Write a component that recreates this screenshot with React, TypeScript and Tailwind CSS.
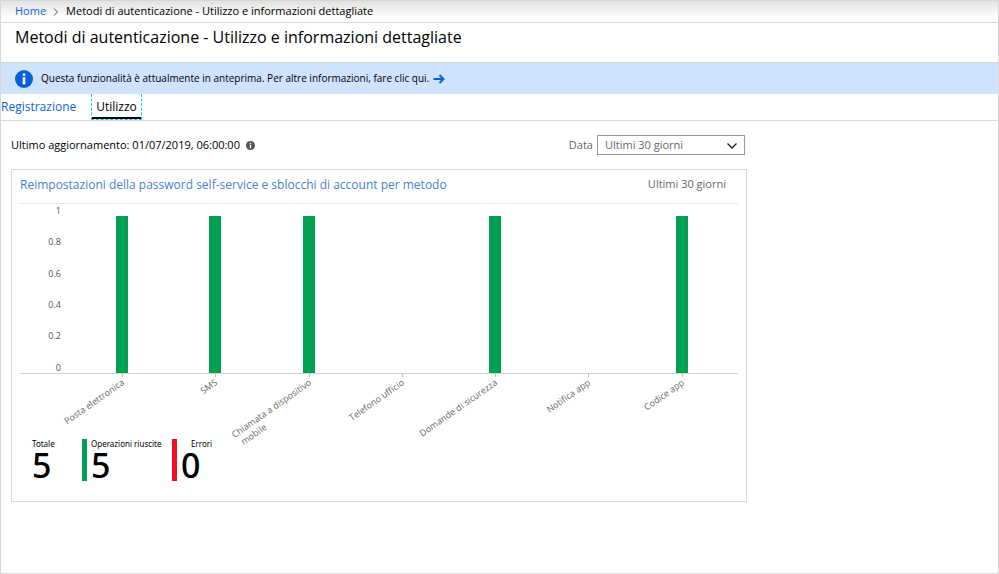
const bars = [
  { label: ['Posta elettronica'], value: 1 },
  { label: ['SMS'], value: 1 },
  { label: ['Chiamata a dispositivo', 'mobile'], value: 1 },
  { label: ['Telefono ufficio'], value: 0 },
  { label: ['Domande di sicurezza'], value: 1 },
  { label: ['Notifica app'], value: 0 },
  { label: ['Codice app'], value: 1 },
]

const ticks = ['1', '0.8', '0.6', '0.4', '0.2', '0']

function InfoIcon({ className }: { className: string }) {
  return (
    <svg viewBox="0 0 18 18" className={className} aria-hidden="true">
      <circle cx="9" cy="9" r="9" fill="currentColor" />
      <rect x="7.7" y="3.4" width="2.6" height="2.4" className="fill-white" />
      <rect x="7.7" y="7.2" width="2.6" height="7.2" className="fill-white" />
    </svg>
  )
}

function Chart() {
  return (
    <svg viewBox="0 0 718 250" className="block w-full" role="img" aria-label="Reimpostazioni per metodo">
      {ticks.map((tick, i) => (
        <text key={tick} x="41" y={10 + Math.round(i * 31.3)} textAnchor="end" className="fill-[#555] text-[9px]">
          {tick}
        </text>
      ))}
      <rect x="0" y="169" width="718" height="1" className="fill-[#d0d0d0]" />
      {bars.map((bar, i) => {
        const x = Math.round(102 + i * 93.25)
        return (
          <g key={bar.label[0]}>
            <rect x={x} y="170" width="1" height="3" className="fill-[#bbb]" />
            {bar.value > 0 && (
              <rect x={x - 6} y={169 - bar.value * 157} width="12" height={bar.value * 157} className="fill-[#00a152]" />
            )}
            <g transform={`translate(${x + 3} 180) rotate(-35)`} className="fill-[#666] text-[9px]">
              <text textAnchor="end">{bar.label[0]}</text>
              {bar.label[1] && (
                <text x="-91" y="11">
                  {bar.label[1]}
                </text>
              )}
            </g>
          </g>
        )
      })}
    </svg>
  )
}

export default function App() {
  return (
    <div className="min-h-screen border border-[#d6d6d6] bg-white font-['Open_Sans','Noto_Sans',sans-serif] text-black">
      <nav className="flex h-[22px] items-center border-b border-[#d6d6d6] bg-linear-to-b from-[#e2e2e2] to-white to-80% px-3.5 text-[11px]">
        <a href="#" className="text-[#0f62d6]">Home</a>
        <svg viewBox="0 0 6 8" className="mx-[7px] h-2 w-1.5 fill-none stroke-[#555]" aria-hidden="true">
          <path d="M1 0.5 4.5 4 1 7.5" />
        </svg>
        <span>Metodi di autenticazione - Utilizzo e informazioni dettagliate</span>
      </nav>

      <header className="h-10 border-b border-[#d2d6da] px-3.5">
        <h1 className="text-base leading-7">Metodi di autenticazione - Utilizzo e informazioni dettagliate</h1>
      </header>

      <div className="flex h-[31px] items-center bg-[#cfe3fd] px-3.5 text-[10px]">
        <InfoIcon className="mr-2 size-[18px] text-[#0a5fd8]" />
        <span>Questa funzionalità è attualmente in anteprima. Per altre informazioni, fare clic qui.</span>
        <a href="#" aria-label="Altre informazioni" className="ml-1 text-[#0f62d6]">
          <svg viewBox="0 0 12 10" className="h-2.5 w-3 fill-none stroke-current stroke-2" aria-hidden="true">
            <path d="M0.5 5H10M6.5 1 10.5 5 6.5 9" />
          </svg>
        </a>
      </div>

      <div role="tablist" className="flex h-[27px] border-b border-[#d9d9d9] text-xs">
        <button role="tab" aria-selected="false" className="mr-[15px] text-[#0f62d6]">Registrazione</button>
        <button role="tab" aria-selected="true" className="border-x border-b border-dashed border-[#19c8ee]">
          <span className="block h-full border-b-2 border-solid border-black px-1 leading-[26px]">Utilizzo</span>
        </button>
      </div>

      <main className="max-w-[746px] pl-2.5">
        <div className="flex h-12 items-center justify-between text-[11px]">
          <p className="flex items-center">
            Ultimo aggiornamento: 01/07/2019, 06:00:00
            <InfoIcon className="ml-1.5 size-[9px] text-[#555]" />
          </p>
          <div className="flex items-center gap-1 pr-0.5 text-[#666]">
            <label htmlFor="range">Data</label>
            <div className="relative">
              <select id="range" className="block h-5 w-37 appearance-none border border-[#999] bg-white pl-[7px]">
                <option>Ultimi 30 giorni</option>
              </select>
              <svg viewBox="0 0 10 6" className="pointer-events-none absolute top-2 right-2 h-1.5 w-2.5 fill-none stroke-[#222] stroke-[1.4]" aria-hidden="true">
                <path d="M0.5 0.5 5 5 9.5 0.5" />
              </svg>
            </div>
          </div>
        </div>

        <section className="border border-[#d9d9d9] px-2 pb-5">
          <div className="flex h-[34px] items-center justify-between border-b border-[#e8e8e8] pr-3 pb-1 text-[11px]">
            <h2 className="text-xs text-[#4a80cc]">Reimpostazioni della password self-service e sblocchi di account per metodo</h2>
            <span className="text-[#666]">Ultimi 30 giorni</span>
          </div>
          <Chart />
          <dl className="-mt-[15px] flex pl-3 font-['Noto_Sans',sans-serif]">
            <div className="w-[50px]">
              <dt className="text-[8px] leading-[10px]">Totale</dt>
              <dd className="text-[34px] leading-8 font-medium">5</dd>
            </div>
            <div className="w-[90px] border-l-5 border-[#00a152] pl-1">
              <dt className="text-[8px] leading-[10px]">Operazioni riuscite</dt>
              <dd className="text-[34px] leading-8 font-medium">5</dd>
            </div>
            <div className="border-l-5 border-[#ee1126] pl-1">
              <dt className="pl-2.5 text-[8px] leading-[10px]">Errori</dt>
              <dd className="text-[34px] leading-8 font-medium">0</dd>
            </div>
          </dl>
        </section>
      </main>
    </div>
  )
}
